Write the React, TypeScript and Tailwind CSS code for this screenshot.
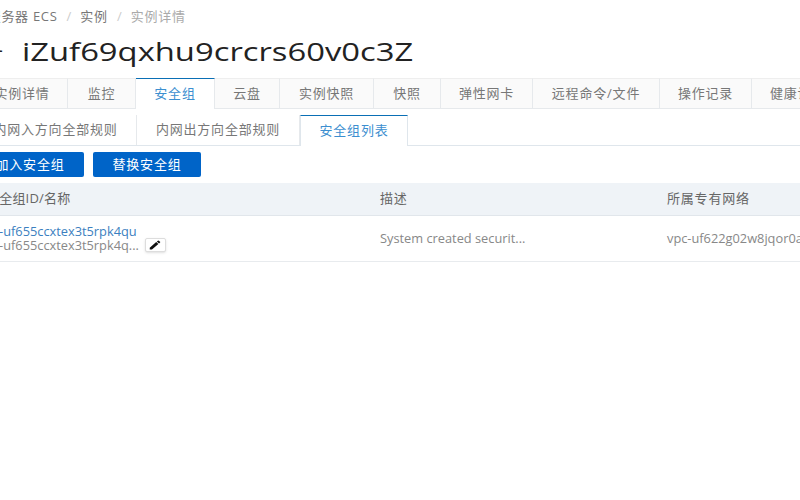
import React from "react";

const font = { fontFamily: '"Open Sans", "Noto Sans CJK SC", sans-serif' };

const tabs = [
  { label: "实例详情", w: "w-[84px] pr-[7px]" },
  { label: "监控", w: "w-[68px]" },
  { label: "安全组", w: "w-[79px]", active: true },
  { label: "云盘", w: "w-[65px]" },
  { label: "实例快照", w: "w-[94px]" },
  { label: "快照", w: "w-[67px]" },
  { label: "弹性网卡", w: "w-[92px]" },
  { label: "远程命令/文件", w: "w-[127px]" },
  { label: "操作记录", w: "w-[92px]" },
  { label: "健康诊断", w: "w-[92px]" },
];

const subTabs = [
  { label: "内网入方向全部规则", w: "w-[153px] pr-[9px]" },
  { label: "内网出方向全部规则", w: "w-[163px]" },
  { label: "安全组列表", w: "w-[108px]", active: true },
];

export default function App() {
  return (
    <div className="w-[800px] h-[500px] overflow-hidden bg-white" style={font}>
      <div className="w-[1000px] -ml-[16px] pt-[10px]">
        <div className="flex items-center gap-[9px] h-[14px] text-[13px] text-[#777] whitespace-nowrap">
          <span className="-ml-[10px] tracking-[0.7px]">云服务器 ECS</span>
          <span className="text-[#ccc]">/</span>
          <span className="tracking-[0.8px]">实例</span>
          <span className="text-[#ccc]">/</span>
          <span className="tracking-[0.8px] text-[#aaa]">实例详情</span>
        </div>

        <div className="flex items-center h-[36px] mt-[9px] text-[#222]">
          <span className="w-[38px] text-[24px] -ml-[5px] mr-[5px]">←</span>
          <span className="text-[26px] leading-none scale-x-[1.26] origin-left">iZuf69qxhu9crcrs60v0c3Z</span>
        </div>

        <div className="flex h-[31px] mt-[9px] border-b border-[#e6e9ec]">
          {tabs.map((t) => (
            <div
              key={t.label}
              className={
                t.active
                  ? t.w + " h-[31px] flex items-center justify-center bg-white border-t border-t-[#0a6fb5] border-r border-r-[#e6e9ec] text-[13px] tracking-[0.8px] text-[#3c8fd0] whitespace-nowrap"
                  : t.w + " h-[30px] flex items-center justify-center bg-[#fafafa] border-t border-t-[#eee] border-r border-r-[#e6e9ec] text-[13px] tracking-[0.8px] text-[#777] whitespace-nowrap"
              }
            >
              {t.label}
            </div>
          ))}
        </div>

        <div className="flex h-[31px] mt-[6px] border-b border-[#dfe6ec]">
          {subTabs.map((t) => (
            <div
              key={t.label}
              className={
                t.active
                  ? t.w + " h-[31px] flex items-center justify-center bg-white border-t border-t-[#0a6fb5] border-r border-r-[#dfe6ec] border-l border-l-[#dfe6ec] text-[13px] tracking-[0.8px] text-[#3c8fd0] whitespace-nowrap"
                  : t.w + " h-[30px] flex items-center justify-center text-[13px] tracking-[0.8px] text-[#777] border-r border-r-[#e6e9ec] whitespace-nowrap"
              }
            >
              {t.label}
            </div>
          ))}
        </div>

        <div className="flex gap-[9px] mt-[6px]">
          <button className="w-[100px] h-[25px] pr-[8px] bg-[#0064c8] rounded-[2px] text-white text-[13px] tracking-[0.8px]">加入安全组</button>
          <button className="w-[108px] h-[25px] bg-[#0064c8] rounded-[2px] text-white text-[13px] tracking-[0.8px]">替换安全组</button>
        </div>

        <div className="flex items-center h-[33px] mt-[6px] bg-[#eff3f7] border-b border-[#e1e6eb] text-[13px] text-[#666]">
          <span className="w-[396px] pl-[2px] whitespace-nowrap tracking-[0.2px]">安全组ID/名称</span>
          <span className="w-[287px] tracking-[0.8px]">描述</span>
          <span className="tracking-[0.8px]">所属专有网络</span>
        </div>

        <div className="flex items-center h-[46px] border-b border-[#e8ebee] text-[12.8px] text-[#888]">
          <div className="w-[396px] pl-[2px] leading-[13px] whitespace-nowrap">
            <div className="text-[#3c7fc0]">sg-uf655ccxtex3t5rpk4qu</div>
            <div className="flex items-center gap-[6px] h-[14px]">
              <span>sg-uf655ccxtex3t5rpk4q...</span>
              <span className="w-[21px] h-[14px] flex items-center justify-center bg-white border border-[#ddd] rounded-[2px] shadow-sm">
                <svg width="14" height="12" viewBox="0 0 24 24" fill="#111" preserveAspectRatio="none">
                  <path d="M3 17.25V21h3.75L17.81 9.94l-3.75-3.75L3 17.25zM20.71 7.04a1 1 0 0 0 0-1.41l-2.34-2.34a1 1 0 0 0-1.41 0l-1.83 1.83 3.75 3.75 1.83-1.83z" />
                </svg>
              </span>
            </div>
          </div>
          <span className="w-[287px]">System created securit...</span>
          <span className="whitespace-nowrap">vpc-uf622g02w8jqor0abcd1</span>
        </div>
      </div>
    </div>
  );
}
